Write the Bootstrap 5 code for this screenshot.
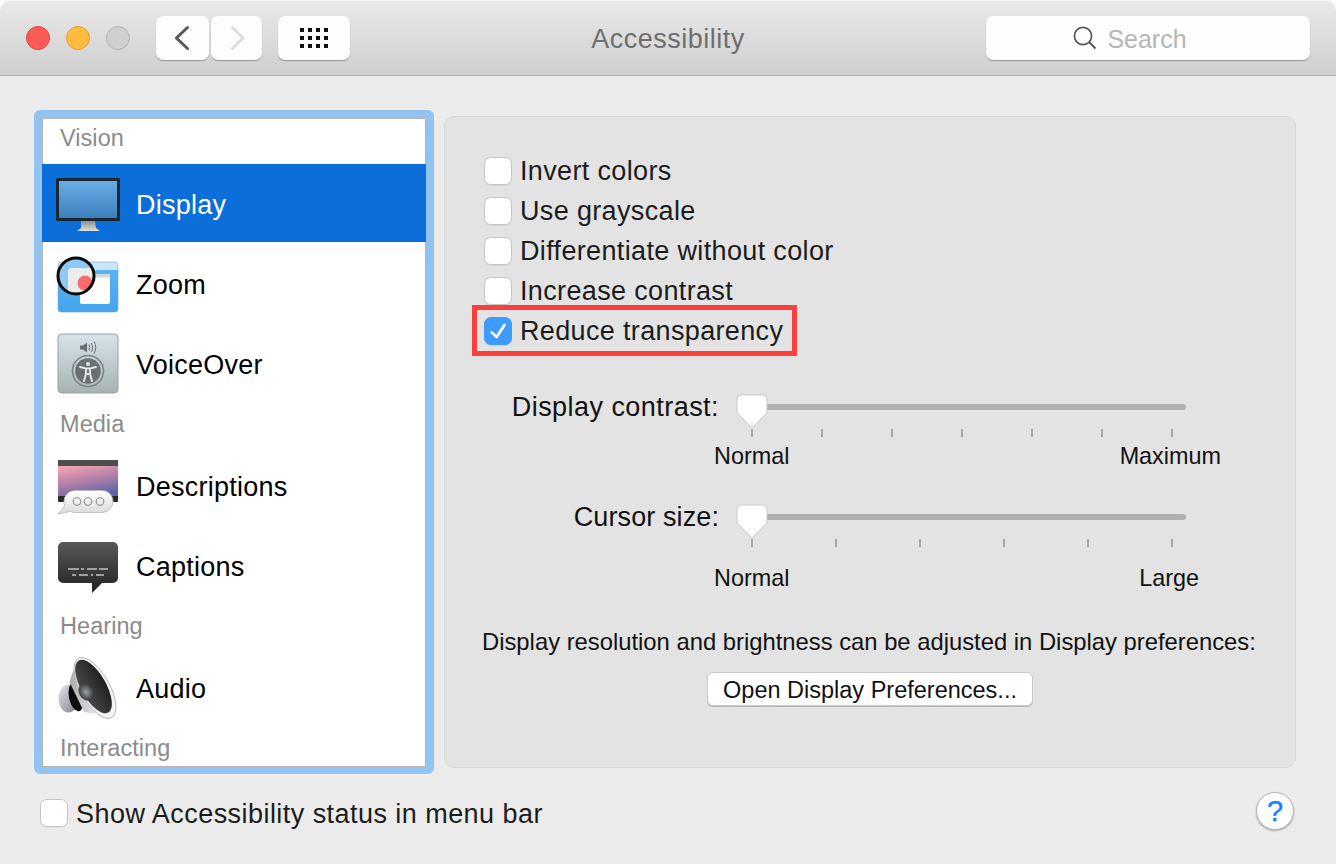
<!DOCTYPE html>
<html lang="en">
<head>
<meta charset="utf-8">
<title>Accessibility</title>
<link href="https://cdn.jsdelivr.net/npm/bootstrap@5.3.0/dist/css/bootstrap.min.css" rel="stylesheet">
<style>
html,body{height:100%;background:#fff;overflow:hidden}
body{font-family:"Liberation Sans",Arial,sans-serif;color:#1c1c1c}
.win{height:864px;width:1336px;background:#ececec;border-radius:12px 12px 0 0;overflow:hidden}
.tbar{height:76px;padding:16px 26px 0;background:linear-gradient(#e9e9e9,#cfcfcf);border-bottom:1px solid #b0b0b0;box-shadow:inset 0 1px 0 #f3f3f3}
.tl{width:24px;height:24px;border-radius:50%;margin-top:10px;margin-right:16px;border:1px solid}
.tl-r{background:#fc5b57;border-color:#e2463f}
.tl-y{background:#fdbc40;border-color:#e1a030}
.tl-g{background:#cfcfcf;border-color:#b5b5b5;margin-right:26px}
.tb-btn{height:44px;padding:0;border:0;border-radius:7px;background:#fdfdfd;box-shadow:0 1px 1px rgba(0,0,0,.3)}
.tb-back{width:53px;margin-right:2px}
.tb-fwd{width:51px;margin-right:16px}
.tb-grid{width:72px}
.ttl{font-size:27px;color:#6e6e6e;line-height:46px;letter-spacing:.5px}
.srch{width:324px;height:44px;padding-right:36px;border-radius:7px;background:#fdfdfd;box-shadow:0 1px 1px rgba(0,0,0,.3);color:#b6b6b6;font-size:25px;gap:10px}
.srch span{padding-top:3px}
.mainrow{padding:34px 40px 0 34px;height:688px}
.side{width:400px;height:664px;background:#fff;border:8px solid #93c3f0;border-bottom-width:7px;border-radius:6px;box-shadow:inset 0 0 0 1px #b4b4b4;overflow:hidden}
.side-list{background:transparent;border-radius:0}
.cat{height:40px;padding-left:18px;font-size:23.5px;line-height:40px;color:#8b8b8b;flex:none;letter-spacing:.05px}
.cat-first{height:46px}
.cat-gap{margin-bottom:2px}
.it{height:80px;padding:0 0 0 14px;border:0!important;background:transparent;color:#000;font-size:27px;letter-spacing:.25px;gap:16px;flex:none;border-radius:0!important}
.it span{padding-top:2px}
.it.active{height:78px;background:#0b6ed9;color:#fff;margin-bottom:2px}
.it.active span{padding-top:4px}
.panel-main{width:852px;height:652px;margin:6px 0 0 10px;padding:34px 39px 0;background:#e3e3e3;border:1px solid #d9d9d9;border-radius:10px}
.cbrow{height:40px;font-size:27px;letter-spacing:.35px;gap:8px;line-height:40px}
.ck{width:28px;height:28px;margin:0;flex:none;border:1px solid #c6c6c6;border-radius:6px;background-color:#fff;box-shadow:0 1px 0 rgba(0,0,0,.06)}
.ck:checked{background-color:#3f9bfd;border-color:#3f9bfd;background-size:100%;background-image:url("data:image/svg+xml,%3csvg xmlns='http://www.w3.org/2000/svg' viewBox='0 0 28 28'%3e%3cpath d='M7.300 15.500l5.200 5L21 7.500' fill='none' stroke='%23fff' stroke-width='2.900' stroke-linecap='round' stroke-linejoin='round'/%3e%3c/svg%3e")}
.ck:focus{box-shadow:none;border-color:#c6c6c6}
.redbox{left:-12px;top:-6px;width:325px;height:51px;border:5px solid #f9403c}
.sl-row{height:40px;font-size:27px;letter-spacing:.45px;margin-top:36px}
.sl-row2{margin-top:26px;letter-spacing:.1px}
.sl-lab{width:235px;text-align:right;line-height:40px;color:#111}
.sl-area{width:434px;margin-left:33px;height:6px;background:#b0b0b0;border-radius:3px}
.thumb{left:-16px;top:-10px}
.ticks{width:422px;height:8px;margin:2px 0 0 267px}
.tick{width:2px;height:8px;background:#a6a6a6}
.sl-text{font-size:23.4px;line-height:30px;margin:4px 0 0 230px;color:#111}
.sl-text2{margin-top:16px;width:485px}
.sl-text1{width:507px}
.note{font-size:23.8px;line-height:30px;margin:34px -10px 0 -2px;white-space:nowrap;color:#111}
.open-btn{height:34px;width:326px;padding:1px 0 0;font-size:23.5px;line-height:32px;color:#111;background:#fff;border:1px solid #c9c9c9;border-radius:6px;box-shadow:0 1px 0 #b5b5b5;margin:15px 0 0 223px}
.foot{padding:28px 42px 0 40px;font-size:27px}
.foot-txt{margin-left:8px;padding-top:2px;letter-spacing:.45px}
.help{width:38px;height:38px;padding:0;border-radius:50%;background:#fff;border:1px solid #b8b8b8;box-shadow:0 1px 2px rgba(0,0,0,.3);color:#1584fb;font-size:29px;line-height:36px;text-align:center;margin-top:-4px;-webkit-text-stroke:.4px #1584fb}
</style>
</head>
<body>
<div class="win">
  <div class="tbar d-flex">
    <div class="d-flex align-items-start">
      <span class="tl tl-r"></span><span class="tl tl-y"></span><span class="tl tl-g"></span>
      <button class="btn tb-btn tb-back d-flex align-items-center justify-content-center" aria-label="Back"><svg width="16" height="28" viewBox="0 0 16 28"><path d="M12.500 3.500 1.500 14l11 10.500" fill="none" stroke="#5b5b5b" stroke-width="3" stroke-linecap="round"/></svg></button>
      <button class="btn tb-btn tb-fwd d-flex align-items-center justify-content-center" aria-label="Forward"><svg width="16" height="28" viewBox="0 0 16 28"><path d="m3.500 3.500 10.500 10.500L3.500 24.500" fill="none" stroke="#dedede" stroke-width="3" stroke-linecap="round"/></svg></button>
      <button class="btn tb-btn tb-grid d-flex align-items-center justify-content-center" aria-label="All preferences"><svg width="28" height="20" viewBox="0 0 28 20" fill="#111"><path d="M0 0h4v4H0zM8 0h4v4H8zM16 0h4v4h-4zM24 0h4v4h-4zM0 8h4v4H0zM8 8h4v4H8zM16 8h4v4h-4zM24 8h4v4h-4zM0 16h4v4H0zM8 16h4v4H8zM16 16h4v4h-4zM24 16h4v4h-4z"/></svg></button>
    </div>
    <div class="flex-grow-1 text-center ttl">Accessibility</div>
    <div class="srch d-flex align-items-center justify-content-center">
      <svg width="24" height="24" viewBox="0 0 24 24"><circle cx="10" cy="10" r="8.600" fill="none" stroke="#555" stroke-width="1.700"/><path d="m16.500 16.500 6 6" stroke="#555" stroke-width="2"/></svg>
      <span>Search</span>
    </div>
  </div>

  <div class="mainrow d-flex align-items-start">
    <div class="side">
      <div class="list-group side-list">
        <div class="cat cat-first">Vision</div>
        <div class="list-group-item it active d-flex align-items-center">
          <svg width="64" height="64" viewBox="0 0 64 64"><defs><linearGradient id="scr" x1="0" y1="0" x2="0" y2="1"><stop offset="0" stop-color="#69ade7"/><stop offset="1" stop-color="#3c7fbc"/></linearGradient><linearGradient id="std" x1="0" y1="0" x2="0" y2="1"><stop offset="0" stop-color="#8f8f8f"/><stop offset="1" stop-color="#e0e0e0"/></linearGradient></defs><path d="M25 50h14l1 7 4 3H21l4-3z" fill="url(#std)"/><rect x="0" y="7" width="64" height="43" rx="1.500" fill="#1d2733"/><rect x="3" y="10" width="58" height="37" fill="url(#scr)"/></svg>
          <span>Display</span>
        </div>
        <div class="list-group-item it d-flex align-items-center">
          <svg width="64" height="64" viewBox="0 0 64 64"><defs><linearGradient id="zm" x1="0" y1="0" x2="0" y2="1"><stop offset="0" stop-color="#c9e6fb"/><stop offset=".16" stop-color="#c9e6fb"/><stop offset=".17" stop-color="#58b3f5"/><stop offset="1" stop-color="#44a4ec"/></linearGradient><clipPath id="lens"><circle cx="20" cy="24" r="18"/></clipPath></defs><rect x="2" y="10" width="60" height="50" rx="3" fill="url(#zm)" stroke="#7ba9c9" stroke-width=".6"/><rect x="24" y="22" width="30" height="30" rx="2" fill="#fff"/><rect x="24" y="22" width="30" height="3.500" fill="#d6d6d6"/><g clip-path="url(#lens)"><circle cx="20" cy="24" r="18" fill="#8cc9f6"/><rect x="12" y="16" width="26" height="26" rx="4" fill="#ececec"/><circle cx="29" cy="31" r="7.500" fill="#fb6a6f"/></g><circle cx="20" cy="24" r="18" fill="none" stroke="#0a0a0a" stroke-width="3"/></svg>
          <span>Zoom</span>
        </div>
        <div class="list-group-item it d-flex align-items-center">
          <svg width="64" height="64" viewBox="0 0 64 64"><defs><linearGradient id="vo" x1="0" y1="0" x2="0" y2="1"><stop offset="0" stop-color="#d5e4ea"/><stop offset="1" stop-color="#a9b2b3"/></linearGradient></defs><rect x="2" y="2" width="60" height="59" rx="4" fill="url(#vo)" stroke="#9aa3a5"/><path d="M24 13.500h3l4-3v10l-4-3h-3z" fill="#666e70"/><path d="M33 12.500q1.500 3 0 6M35.500 11q2.500 4.500 0 9M38 9.500q3.500 6 0 12" fill="none" stroke="#666e70" stroke-width="1"/><circle cx="32" cy="39" r="15.500" fill="none" stroke="#7a8183" stroke-width="1.500"/><circle cx="32" cy="39" r="12.800" fill="#6a7173"/><circle cx="32" cy="32" r="2" fill="#e1e6e6"/><path d="M24 35l6 1.500h4l6-1.500M30 36.500v5l-2 7.500M34 36.500v5l2 7.500M30 42h4" fill="none" stroke="#e1e6e6" stroke-width="2" stroke-linecap="round"/></svg>
          <span>VoiceOver</span>
        </div>
        <div class="cat cat-gap">Media</div>
        <div class="list-group-item it d-flex align-items-center">
          <svg width="64" height="64" viewBox="0 0 64 64"><defs><linearGradient id="ds" x1=".2" y1="0" x2=".6" y2="1"><stop offset="0" stop-color="#f2a3b3"/><stop offset=".5" stop-color="#b37fa8"/><stop offset="1" stop-color="#5f66a8"/></linearGradient><linearGradient id="bb" x1="0" y1="0" x2="0" y2="1"><stop offset="0" stop-color="#fff"/><stop offset="1" stop-color="#dcdcdc"/></linearGradient></defs><rect x="2" y="6" width="60" height="42" rx="1" fill="#2a2a2a"/><rect x="2" y="6" width="60" height="6" fill="#4d4d4d"/><rect x="2" y="12" width="60" height="30" fill="url(#ds)"/><path d="M19 36.500h27a11 11 0 0 1 0 22H19c-2 0-4-.5-5-1.500-2.500 1.500-7 2.500-12 2.500 3-2 5.500-5 6.500-8.500-.5-1-.5-2-.5-3.500a11 11 0 0 1 11-11z" fill="url(#bb)" stroke="#b8b8b8" stroke-width=".8"/><g fill="none" stroke="#8d8d8d" stroke-width="1.100"><circle cx="21" cy="47.500" r="3.800"/><circle cx="32" cy="47.500" r="3.800"/><circle cx="44" cy="47.500" r="3.800"/></g></svg>
          <span>Descriptions</span>
        </div>
        <div class="list-group-item it d-flex align-items-center">
          <svg width="64" height="64" viewBox="0 0 64 64"><defs><linearGradient id="cp" x1="0" y1="0" x2="0" y2="1"><stop offset="0" stop-color="#585858"/><stop offset="1" stop-color="#232323"/></linearGradient></defs><path d="M7 8h50a5 5 0 0 1 5 5v31a5 5 0 0 1-5 5H46L36 59V49H7a5 5 0 0 1-5-5V13a5 5 0 0 1 5-5z" fill="url(#cp)"/><path d="M12 35h11M25 35h3M31 35h10M43 35h9M16 41h4M23 41h9M35 41h2M40 41h8" stroke="#c2c2c2" stroke-width="1.600"/></svg>
          <span>Captions</span>
        </div>
        <div class="cat cat-gap">Hearing</div>
        <div class="list-group-item it d-flex align-items-center">
          <svg width="64" height="64" viewBox="0 0 64 64"><defs><linearGradient id="ac" x1="0" y1="0" x2="1" y2="0"><stop offset="0" stop-color="#4a4a4c"/><stop offset="1" stop-color="#202022"/></linearGradient><linearGradient id="am" x1="0" y1="0" x2="1" y2="1"><stop offset="0" stop-color="#e6e6ec"/><stop offset="1" stop-color="#7f7f88"/></linearGradient><linearGradient id="sil" x1="0" y1="0" x2="1" y2="0"><stop offset="0" stop-color="#a8a8ae"/><stop offset="1" stop-color="#e8e8ec"/></linearGradient><radialGradient id="ctr"><stop offset="0" stop-color="#9aa0a0"/><stop offset="1" stop-color="#3a3d3e"/></radialGradient></defs><ellipse cx="12.500" cy="42.500" rx="10" ry="14" fill="url(#am)"/><ellipse cx="20" cy="41" rx="7" ry="14.500" fill="#0c0c0c" transform="rotate(-12 20 41)"/><path d="M21 3 13.500 26 28 56l12 2z" fill="url(#sil)"/><ellipse cx="39" cy="32" rx="14.500" ry="34" fill="#f4f4f4" stroke="#aeaeae" stroke-width=".8" transform="rotate(-29.500 39 32)"/><ellipse cx="37.500" cy="30.500" rx="12.500" ry="30" fill="url(#ac)" transform="rotate(-29.500 37.500 30.500)"/><ellipse cx="30" cy="36" rx="7" ry="9" fill="url(#ctr)" transform="rotate(-29.500 30 36)"/></svg>
          <span>Audio</span>
        </div>
        <div class="cat">Interacting</div>
      </div>
    </div>

    <div class="panel-main">
      <div class="cbrow d-flex align-items-center"><input class="form-check-input ck" type="checkbox" aria-label="Invert colors"><span>Invert colors</span></div>
      <div class="cbrow d-flex align-items-center"><input class="form-check-input ck" type="checkbox" aria-label="Use grayscale"><span>Use grayscale</span></div>
      <div class="cbrow d-flex align-items-center"><input class="form-check-input ck" type="checkbox" aria-label="Differentiate without color"><span>Differentiate without color</span></div>
      <div class="cbrow d-flex align-items-center"><input class="form-check-input ck" type="checkbox" aria-label="Increase contrast"><span>Increase contrast</span></div>
      <div class="cbrow d-flex align-items-center position-relative"><input class="form-check-input ck" type="checkbox" checked aria-label="Reduce transparency"><span>Reduce transparency</span><div class="redbox position-absolute"></div></div>

      <div class="sl-row d-flex align-items-center">
        <div class="sl-lab">Display contrast:</div>
        <div class="sl-area position-relative"><svg class="thumb position-absolute" width="32" height="36" viewBox="0 0 32 36"><path d="M5 1h22a4 4 0 0 1 4 4v14L16 34 1 19V5a4 4 0 0 1 4-4z" fill="#fff" stroke="#c8c8c8"/></svg></div>
      </div>
      <div class="ticks d-flex justify-content-between"><i class="tick"></i><i class="tick"></i><i class="tick"></i><i class="tick"></i><i class="tick"></i><i class="tick"></i><i class="tick"></i></div>
      <div class="sl-text sl-text1 d-flex justify-content-between"><span>Normal</span><span>Maximum</span></div>

      <div class="sl-row sl-row2 d-flex align-items-center">
        <div class="sl-lab">Cursor size:</div>
        <div class="sl-area position-relative"><svg class="thumb position-absolute" width="32" height="36" viewBox="0 0 32 36"><path d="M5 1h22a4 4 0 0 1 4 4v14L16 34 1 19V5a4 4 0 0 1 4-4z" fill="#fff" stroke="#c8c8c8"/></svg></div>
      </div>
      <div class="ticks d-flex justify-content-between"><i class="tick"></i><i class="tick"></i><i class="tick"></i><i class="tick"></i><i class="tick"></i><i class="tick"></i></div>
      <div class="sl-text sl-text2 d-flex justify-content-between"><span>Normal</span><span>Large</span></div>

      <div class="note">Display resolution and brightness can be adjusted in Display preferences:</div>
      <button class="btn open-btn d-block">Open Display Preferences...</button>
    </div>
  </div>

  <div class="foot d-flex align-items-center justify-content-between">
    <div class="d-flex align-items-center"><input class="form-check-input ck" type="checkbox" aria-label="Show Accessibility status in menu bar"><span class="foot-txt">Show Accessibility status in menu bar</span></div>
    <button class="btn help" aria-label="Help">?</button>
  </div>
</div>
<script src="https://cdn.jsdelivr.net/npm/bootstrap@5.3.0/dist/js/bootstrap.bundle.min.js"></script>
</body>
</html>
